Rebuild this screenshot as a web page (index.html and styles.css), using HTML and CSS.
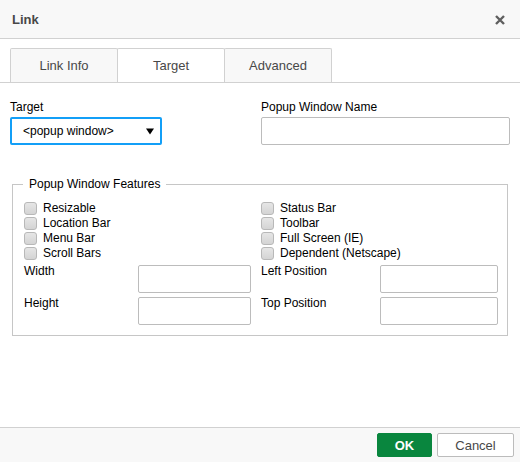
FILE: index.html
```html
<!DOCTYPE html>
<html>
<head>
<meta charset="utf-8">
<link rel="stylesheet" href="styles.css">
</head>
<body>
<div class="dialog">
  <div class="titlebar">
    <span class="title">Link</span>
    <svg class="close" width="10" height="10" viewBox="0 0 10 10"><path d="M1 1L9 9M9 1L1 9" stroke="#5f5f5f" stroke-width="2.4" stroke-linecap="butt"/></svg>
  </div>
  <div class="tabs">
    <div class="tab">Link Info</div>
    <div class="tab active">Target</div>
    <div class="tab">Advanced</div>
  </div>
  <div class="content">
    <div class="toprow">
      <div class="cell">
        <div class="label">Target</div>
        <div class="select">
          <span>&lt;popup window&gt;</span>
          <svg width="8" height="7" viewBox="0 0 8 7"><path d="M0 0.5H8L4 6.5Z" fill="#000"/></svg>
        </div>
      </div>
      <div class="cell">
        <div class="label">Popup Window Name</div>
        <div class="input wide"></div>
      </div>
    </div>
    <fieldset class="features">
      <legend>Popup Window Features</legend>
      <div class="cols">
        <div class="col left">
          <div class="check"><span class="box"></span>Resizable</div>
          <div class="check"><span class="box"></span>Location Bar</div>
          <div class="check"><span class="box"></span>Menu Bar</div>
          <div class="check"><span class="box"></span>Scroll Bars</div>
          <div class="field first"><span class="flabel">Width</span><span class="input small"></span></div>
          <div class="field"><span class="flabel">Height</span><span class="input small"></span></div>
        </div>
        <div class="col right">
          <div class="check"><span class="box"></span>Status Bar</div>
          <div class="check"><span class="box"></span>Toolbar</div>
          <div class="check"><span class="box"></span>Full Screen (IE)</div>
          <div class="check"><span class="box"></span>Dependent (Netscape)</div>
          <div class="field first"><span class="flabel">Left Position</span><span class="input small2"></span></div>
          <div class="field"><span class="flabel">Top Position</span><span class="input small2"></span></div>
        </div>
      </div>
    </fieldset>
  </div>
  <div class="footer">
    <button class="btn ok">OK</button>
    <button class="btn cancel">Cancel</button>
  </div>
</div>
</body>
</html>
```

FILE: styles.css
```css
* { box-sizing: border-box; }
html, body { margin: 0; padding: 0; background: #fff; }
body {
  font-family: "Liberation Sans", Arial, sans-serif;
  font-size: 12px;
  line-height: 15px;
  color: #000;
}
.dialog {
  width: 520px;
  height: 462px;
  display: flex;
  flex-direction: column;
  background: #fff;
}
.titlebar {
  height: 39px;
  background: #f8f8f8;
  border-bottom: 1px solid #d1d1d1;
  display: flex;
  align-items: center;
  justify-content: space-between;
  padding: 0 15px 0 12px;
}
.title {
  font-weight: bold;
  font-size: 13px;
  color: #484848;
}
.close { display: block; margin-top: 1px; }
.tabs {
  display: flex;
  padding: 9px 0 0 10px;
  border-bottom: 1px solid #d1d1d1;
  height: 44px;
}
.tab {
  width: 108px;
  height: 34px;
  border: 1px solid #d1d1d1;
  border-bottom: none;
  background: #f8f8f8;
  color: #484848;
  font-size: 13px;
  display: flex;
  align-items: center;
  justify-content: center;
  border-radius: 2px 2px 0 0;
}
.tab + .tab { margin-left: -1px; }
.tab.active { background: #fff; }
.content {
  padding: 17px 10px 0 10px;
}
.toprow {
  display: grid;
  grid-template-columns: 251px 249px;
}
.label { margin-bottom: 2px; }
.select {
  width: 152px;
  height: 28px;
  border: 2px solid #139ff7;
  border-radius: 2px;
  display: flex;
  align-items: center;
  justify-content: space-between;
  padding: 0 6px 0 11px;
}
.select svg { display: block; margin-top: 1px; }
.input {
  display: block;
  height: 28px;
  border: 1px solid #bcbcbc;
  border-radius: 2px;
  background: #fff;
}
.input.wide { width: 249px; }
.input.small { width: 113px; flex: none; margin-top: 1px; }
.input.small2 { width: 118px; flex: none; margin-top: 1px; }
.features {
  margin: 32px 0 0 2px;
  width: 496px;
  min-width: 0;
  border: 1px solid #c6c6c6;
  padding: 9px 9px 10px 11px;
}
.features legend {
  padding: 0 6px;
  margin-left: -1px;
  line-height: 15px;
  font-size: 12px;
}
.cols {
  display: grid;
  grid-template-columns: 227px 237px;
  column-gap: 10px;
}
.col { display: flex; flex-direction: column; }
.check {
  display: flex;
  align-items: center;
  height: 15px;
}
.box {
  width: 13px;
  height: 13px;
  border: 1px solid #b8b8b8;
  border-radius: 3px;
  background: linear-gradient(#e6e6e6, #d4d4d4);
  margin-right: 6px;
  flex: none;
}
.field {
  display: flex;
  align-items: flex-start;
  margin-top: 3px;
}
.field.first { margin-top: 3px; }
.flabel { flex: 1; }
.footer {
  margin-top: auto;
  height: 35px;
  border-top: 1px solid #d1d1d1;
  background: #f8f8f8;
  display: flex;
  justify-content: flex-end;
  align-items: flex-start;
  gap: 5px;
  padding: 5px 6px 0 0;
}
.btn {
  height: 24px;
  border-radius: 2px;
  font-family: "Liberation Sans", Arial, sans-serif;
  font-size: 13px;
  padding: 0;
  margin: 0;
}
.ok {
  width: 55px;
  background: #09863e;
  border: 1px solid #09863e;
  color: #fff;
  font-weight: bold;
}
.cancel {
  width: 77px;
  background: #fff;
  border: 1px solid #bcbcbc;
  color: #484848;
}
```
